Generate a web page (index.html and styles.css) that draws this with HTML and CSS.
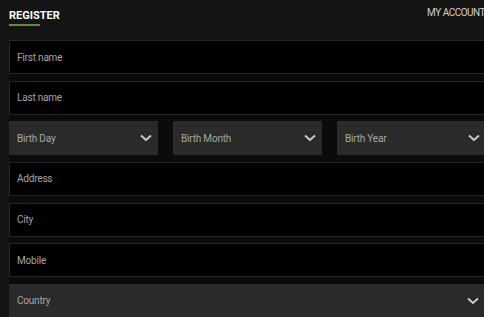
FILE: index.html
```html
<!DOCTYPE html>
<html>
<head>
<meta charset="utf-8">
<link rel="stylesheet" href="styles.css">
</head>
<body>
<div class="page">
  <header class="topbar">
    <div class="tab"><span class="tab-label">REGISTER</span></div>
    <div class="account">MY ACCOUNT</div>
  </header>
  <form class="form">
    <div class="field"><span class="ph">First name</span></div>
    <div class="field"><span class="ph">Last name</span></div>
    <div class="row3">
      <div class="select"><span class="ph">Birth Day</span><svg class="chev" viewBox="0 0 12 8"><path d="M1 1.5 L6 6 L11 1.5" /></svg></div>
      <div class="select"><span class="ph">Birth Month</span><svg class="chev" viewBox="0 0 12 8"><path d="M1 1.5 L6 6 L11 1.5" /></svg></div>
      <div class="select"><span class="ph">Birth Year</span><svg class="chev" viewBox="0 0 12 8"><path d="M1 1.5 L6 6 L11 1.5" /></svg></div>
    </div>
    <div class="field"><span class="ph">Address</span></div>
    <div class="field"><span class="ph">City</span></div>
    <div class="field"><span class="ph">Mobile</span></div>
    <div class="select wide"><span class="ph">Country</span><svg class="chev" viewBox="0 0 12 8"><path d="M1 1.5 L6 6 L11 1.5" /></svg></div>
  </form>
</div>
</body>
</html>
```
FILE: styles.css
```css
html, body {
  margin: 0;
  padding: 0;
  background: #141414;
  overflow: hidden;
}
.page {
  box-sizing: border-box;
  width: 486px;
  padding-left: 9px;
  font-family: Roboto, "Liberation Sans", sans-serif;
}
.topbar {
  display: flex;
  justify-content: space-between;
  align-items: flex-start;
  height: 40px;
  padding-right: 1px;
}
.tab {
  display: flex;
  padding-top: 10px;
}
.tab-label {
  display: block;
  font-family: "Liberation Sans Narrow", Roboto, sans-serif;
  font-weight: bold;
  font-size: 11px;
  color: #ffffff;
  line-height: 12px;
  padding-bottom: 2px;
  border-bottom: 2px solid #5b8f3c;
  width: 31px;
  white-space: nowrap;
}
.account {
  padding-top: 7px;
  font-size: 10px;
  line-height: 12px;
  color: #cfcfcf;
  white-space: nowrap;
  letter-spacing: -0.5px;
}
.form {
  background: #0b0b0b;
  display: flex;
  flex-direction: column;
  gap: 6.67px;
  margin: 0;
  padding-bottom: 20px;
}
.field, .select {
  box-sizing: border-box;
  height: 34px;
  display: flex;
  align-items: center;
  padding: 0 7px;
  border: 1px solid #262626;
  background: #000;
}
.select {
  background: #2a2a2a;
  border-color: #2a2a2a;
  justify-content: space-between;
  padding-right: 5px;
}
.ph {
  font-size: 10px;
  color: #a6a6a6;
  letter-spacing: -0.2px;
}
.row3 {
  display: grid;
  grid-template-columns: 1fr 1fr 1fr;
  gap: 15px;
}
.chev {
  width: 12px;
  height: 8px;
  fill: none;
  stroke: #cfcfcf;
  stroke-width: 1.8;
}
.wide .chev {
  margin-right: 1px;
}
```
